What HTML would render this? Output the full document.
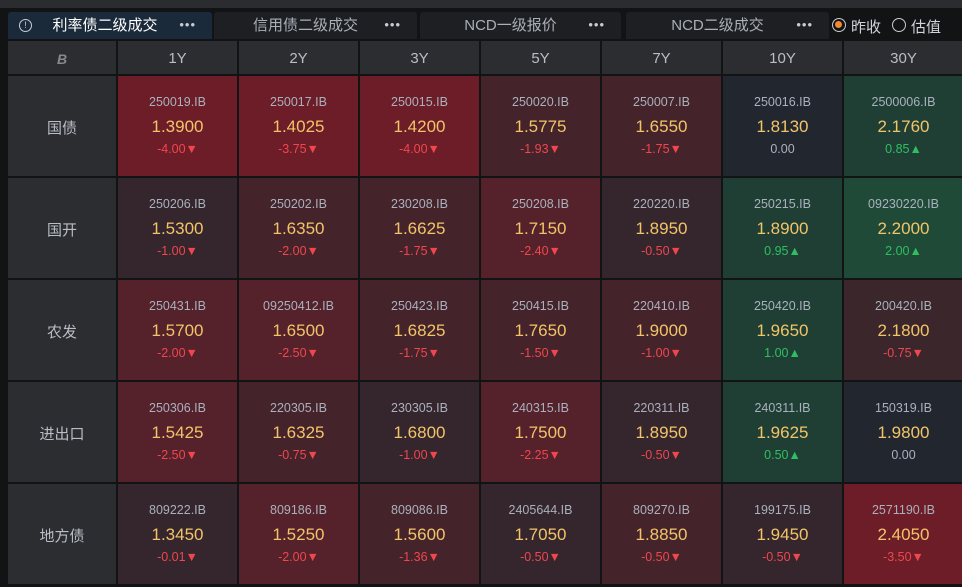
<!DOCTYPE html>
<html><head><meta charset="utf-8"><style>
*{margin:0;padding:0;box-sizing:border-box}
body{width:962px;height:587px;background:#121315;overflow:hidden;position:relative;font-family:"Liberation Sans","Noto Sans CJK SC",sans-serif}
.top{position:absolute;left:0;top:0;width:962px;height:8px;background:#2a2c30}
.tab{position:absolute;top:12px;height:27px;background:#1e1f23;border-radius:3px 3px 0 0;color:#aab0b8;font-size:15px;line-height:28px}
.tab .t{position:absolute;left:0;right:0;text-align:center}
.tab .d{position:absolute;right:16px;top:-1px;font-size:13px;letter-spacing:1px;color:#c8ccd2}
.grid{position:absolute;left:8px;top:41px;display:grid;grid-template-columns:108px repeat(7,119px);grid-template-rows:33px repeat(5,100px);gap:2px}
.h{background:#2b2d31;color:#b9bec6;font-size:15px;display:flex;align-items:center;justify-content:center;padding-top:2px}
.c{position:relative;text-align:center}
.c .a{position:absolute;top:19px;left:0;right:0;font-size:12.5px;color:#a9b1bd}
.c .v{position:absolute;top:41px;left:0;right:0;font-size:17px;color:#f2c46a}
.c .g{position:absolute;top:66px;left:0;right:0;font-size:12.5px}
.r{color:#f0464e}.gr{color:#2fbf62}.z{color:#a9b1bd}
.A{background:#6c1d27}.B{background:#55212b}.C{background:#45232a}.D{background:#35252c}.N{background:#22272f}.G{background:#1f3f34}.G2{background:#1f4a37}
</style></head><body>
<div class="top"></div>
<div class="tab" style="left:8px;width:204px;background:#1b2a3b;color:#fff"><span style="position:absolute;left:11px;top:7px;width:13px;height:13px;border:1.5px solid #c8ccd2;border-radius:50%;font-size:9px;line-height:10px;text-align:center;color:#c8ccd2">!</span><span class="t" style="right:30px;left:20px">利率债二级成交</span><span class="d">•••</span></div>
<div class="tab" style="left:214px;width:203px"><span class="t" style="right:20px">信用债二级成交</span><span class="d">•••</span></div>
<div class="tab" style="left:420px;width:201px"><span class="t" style="right:20px">NCD一级报价</span><span class="d">•••</span></div>
<div class="tab" style="left:626px;width:203px"><span class="t" style="right:20px">NCD二级成交</span><span class="d">•••</span></div>
<div style="position:absolute;left:832px;top:18px;width:14px;height:14px;border:1.5px solid #c8ccd2;border-radius:50%;"><div style="position:absolute;left:2px;top:2px;width:7px;height:7px;border-radius:50%;background:#f28a2c"></div></div>
<div style="position:absolute;left:851px;top:16px;color:#d0d4da;font-size:15px">昨收</div>
<div style="position:absolute;left:892px;top:18px;width:14px;height:14px;border:1.5px solid #c8ccd2;border-radius:50%"></div>
<div style="position:absolute;left:911px;top:16px;color:#d0d4da;font-size:15px">估值</div>
<div class="grid">
<div class="h" style="font-weight:bold;font-style:italic;color:#888;font-size:14px">B</div><div class="h">1Y</div><div class="h">2Y</div><div class="h">3Y</div><div class="h">5Y</div><div class="h">7Y</div><div class="h">10Y</div><div class="h">30Y</div>

<div class="h">国债</div>
<div class="c A"><div class="a">250019.IB</div><div class="v">1.3900</div><div class="g r">-4.00▼</div></div>
<div class="c A"><div class="a">250017.IB</div><div class="v">1.4025</div><div class="g r">-3.75▼</div></div>
<div class="c A"><div class="a">250015.IB</div><div class="v">1.4200</div><div class="g r">-4.00▼</div></div>
<div class="c C"><div class="a">250020.IB</div><div class="v">1.5775</div><div class="g r">-1.93▼</div></div>
<div class="c C"><div class="a">250007.IB</div><div class="v">1.6550</div><div class="g r">-1.75▼</div></div>
<div class="c N"><div class="a">250016.IB</div><div class="v">1.8130</div><div class="g z">0.00</div></div>
<div class="c G"><div class="a">2500006.IB</div><div class="v">2.1760</div><div class="g gr">0.85▲</div></div>

<div class="h">国开</div>
<div class="c D"><div class="a">250206.IB</div><div class="v">1.5300</div><div class="g r">-1.00▼</div></div>
<div class="c C"><div class="a">250202.IB</div><div class="v">1.6350</div><div class="g r">-2.00▼</div></div>
<div class="c C"><div class="a">230208.IB</div><div class="v">1.6625</div><div class="g r">-1.75▼</div></div>
<div class="c B"><div class="a">250208.IB</div><div class="v">1.7150</div><div class="g r">-2.40▼</div></div>
<div class="c D"><div class="a">220220.IB</div><div class="v">1.8950</div><div class="g r">-0.50▼</div></div>
<div class="c G"><div class="a">250215.IB</div><div class="v">1.8900</div><div class="g gr">0.95▲</div></div>
<div class="c G2"><div class="a">09230220.IB</div><div class="v">2.2000</div><div class="g gr">2.00▲</div></div>

<div class="h">农发</div>
<div class="c B"><div class="a">250431.IB</div><div class="v">1.5700</div><div class="g r">-2.00▼</div></div>
<div class="c B"><div class="a">09250412.IB</div><div class="v">1.6500</div><div class="g r">-2.50▼</div></div>
<div class="c C"><div class="a">250423.IB</div><div class="v">1.6825</div><div class="g r">-1.75▼</div></div>
<div class="c C"><div class="a">250415.IB</div><div class="v">1.7650</div><div class="g r">-1.50▼</div></div>
<div class="c C"><div class="a">220410.IB</div><div class="v">1.9000</div><div class="g r">-1.00▼</div></div>
<div class="c G"><div class="a">250420.IB</div><div class="v">1.9650</div><div class="g gr">1.00▲</div></div>
<div class="c D" style="background:#3a262b"><div class="a">200420.IB</div><div class="v">2.1800</div><div class="g r">-0.75▼</div></div>

<div class="h">进出口</div>
<div class="c B"><div class="a">250306.IB</div><div class="v">1.5425</div><div class="g r">-2.50▼</div></div>
<div class="c C"><div class="a">220305.IB</div><div class="v">1.6325</div><div class="g r">-0.75▼</div></div>
<div class="c D"><div class="a">230305.IB</div><div class="v">1.6800</div><div class="g r">-1.00▼</div></div>
<div class="c B"><div class="a">240315.IB</div><div class="v">1.7500</div><div class="g r">-2.25▼</div></div>
<div class="c D"><div class="a">220311.IB</div><div class="v">1.8950</div><div class="g r">-0.50▼</div></div>
<div class="c G"><div class="a">240311.IB</div><div class="v">1.9625</div><div class="g gr">0.50▲</div></div>
<div class="c N"><div class="a">150319.IB</div><div class="v">1.9800</div><div class="g z">0.00</div></div>

<div class="h">地方债</div>
<div class="c D"><div class="a">809222.IB</div><div class="v">1.3450</div><div class="g r">-0.01▼</div></div>
<div class="c B"><div class="a">809186.IB</div><div class="v">1.5250</div><div class="g r">-2.00▼</div></div>
<div class="c C"><div class="a">809086.IB</div><div class="v">1.5600</div><div class="g r">-1.36▼</div></div>
<div class="c D"><div class="a">2405644.IB</div><div class="v">1.7050</div><div class="g r">-0.50▼</div></div>
<div class="c C"><div class="a">809270.IB</div><div class="v">1.8850</div><div class="g r">-0.50▼</div></div>
<div class="c D"><div class="a">199175.IB</div><div class="v">1.9450</div><div class="g r">-0.50▼</div></div>
<div class="c A"><div class="a">2571190.IB</div><div class="v">2.4050</div><div class="g r">-3.50▼</div></div>
</div>
</body></html>
